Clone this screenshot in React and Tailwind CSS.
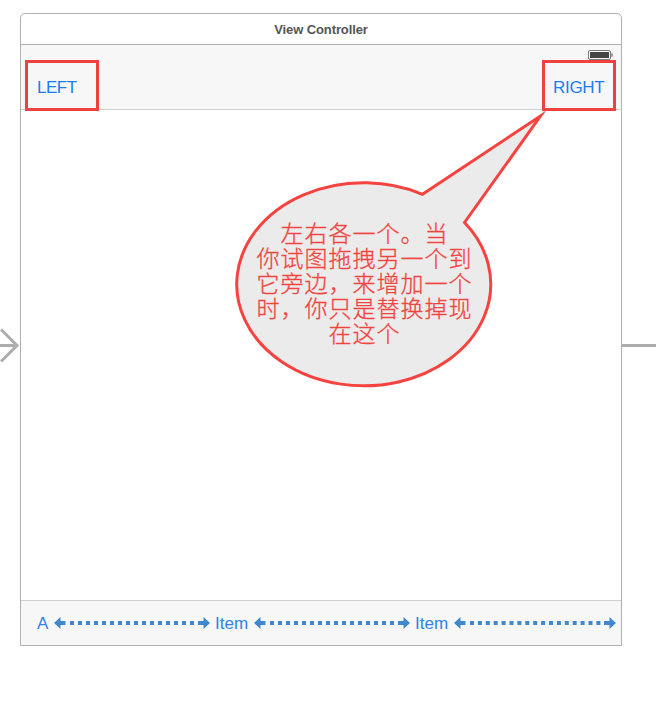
const bubbleLines = ['左右各一个。当', '你试图拖拽另一个到', '它旁边，来增加一个', '时，你只是替换掉现', '在这个'];

// Flexible-space marker: two arrow heads joined by square dots.
function Spacer({ width, period }) {
  const dots = Array.from({ length: Math.round((width - 28) / period) }, (_, i) => 16 + i * period);
  return (
    <svg width={width} height="12" viewBox={`0 0 ${width} 12`} fill="#3f88cd" className="block shrink-0">
      <path d={`M0 6 6.5 0V4H11.5V8H6.5V12Z M${width} 6 ${width - 6.5} 0V4H${width - 12}V8H${width - 6.5}V12Z`} />
      {dots.map((x) => (
        <rect key={x} x={x} y="4" width="4" height="4" />
      ))}
    </svg>
  );
}

function Battery() {
  return (
    <svg width="25" height="10" viewBox="0 0 25 10" className="absolute right-[8px] top-[5px]">
      <rect x=".5" y=".5" width="22" height="9" rx="1.5" fill="#fff" stroke="#777" />
      <rect x="2" y="2" width="19" height="6" rx=".5" fill="#444" />
      <path d="M24 3.2V6.8" stroke="#666" strokeWidth="1.2" />
    </svg>
  );
}

function Bubble() {
  return (
    <div className="absolute left-[230px] top-[105px] h-[290px] w-[320px]">
      <svg width="320" height="290" viewBox="230 105 320 290" className="absolute inset-0">
        <path
          d="M422.5 194.3 540.5 116 464.5 222.5A127 101.5 0 1 1 422.5 194.3Z"
          fill="#ebebeb"
          stroke="#f7433f"
          strokeWidth="3"
          strokeMiterlimit="10"
        />
      </svg>
      <div className="relative ml-[14px] w-[241px] pt-[115px] text-center font-['Noto_Sans_CJK_SC',sans-serif] text-[23px] leading-[25px] font-light tracking-[1px] text-[#f04440] [-webkit-text-stroke:0.3px_#f04440]">
        {bubbleLines.map((line) => (
          <div key={line} className="whitespace-nowrap">{line}</div>
        ))}
      </div>
    </div>
  );
}

export default function App() {
  return (
    <div className="relative h-[713px] w-[656px] overflow-hidden bg-white pt-[13px] pl-[20px] font-['Liberation_Sans',Arial,sans-serif]">
      <div className="flex h-[633px] w-[602px] flex-col rounded-t-[5px] border border-[#b0b0b0] bg-white">
        <div className="flex h-[31px] shrink-0 items-center justify-center border-b border-[#b0b0b0] pt-[2px] text-[13px] font-bold text-[#555]">
          <span className="tracking-[-0.1px]">View Controller</span>
        </div>
        <header className="relative flex h-[65px] shrink-0 items-start justify-between border-b border-[#cfcfcf] bg-[#f7f7f7] pr-[5px] pl-[4px] pt-[15px] text-[17px] text-[#1a7df0]">
          <Battery />
          <div className="flex h-[51px] w-[74px] items-center border-[3px] border-[#ef4240] pt-[5px] pl-[9px]">
            <span className="tracking-[-0.5px]">LEFT</span>
          </div>
          <div className="flex h-[51px] w-[74px] items-center border-[3px] border-[#ef4240] pt-[5px] pl-[8px]">
            <span className="tracking-[-0.3px]">RIGHT</span>
          </div>
        </header>
        <main className="flex-1" />
        <footer className="flex h-[45px] shrink-0 items-center border-t border-[#cfcfcf] bg-[#f7f7f7] pl-[16px] text-[17px] text-[#2f82e6]">
          <span className="w-[17px] pt-[2px]">A</span>
          <Spacer width={156} period={8} />
          <span className="w-[44px] pl-[5px] pt-[2px]">Item</span>
          <Spacer width={156} period={8} />
          <span className="w-[44px] pl-[5px] pt-[2px]">Item</span>
          <Spacer width={162} period={7.9} />
        </footer>
      </div>
      <svg width="20" height="36" viewBox="0 0 20 36" className="absolute left-0 top-[327px]" fill="none" stroke="#adadad" strokeWidth="3">
        <path d="M0 18.5H17M1 2.5 17 18.5 1 34.5" />
      </svg>
      <div className="absolute left-[622px] top-[344px] h-[3px] w-[34px] bg-[#adadad]" />
      <Bubble />
    </div>
  );
}
